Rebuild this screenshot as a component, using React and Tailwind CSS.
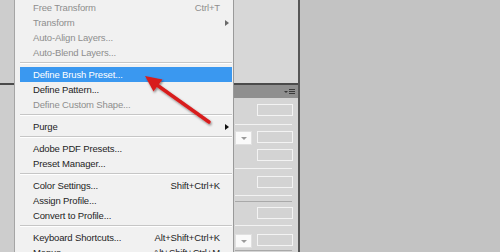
import React from 'react';

const rows = [
  { label: 'Free Transform', key: 'Ctrl+T', off: true },
  { label: 'Transform', sub: true, off: true },
  { label: 'Auto-Align Layers...', off: true },
  { label: 'Auto-Blend Layers...', off: true },
  { sep: true },
  { label: 'Define Brush Preset...', active: true },
  { label: 'Define Pattern...' },
  { label: 'Define Custom Shape...', off: true },
  { sep: true },
  { label: 'Purge', sub: true },
  { sep: true },
  { label: 'Adobe PDF Presets...' },
  { label: 'Preset Manager...' },
  { sep: true },
  { label: 'Color Settings...', key: 'Shift+Ctrl+K' },
  { label: 'Assign Profile...' },
  { label: 'Convert to Profile...' },
  { sep: true },
  { label: 'Keyboard Shortcuts...', key: 'Alt+Shift+Ctrl+K' },
  { label: 'Menus...', key: 'Alt+Shift+Ctrl+M' },
];

const MenuRow = ({ row }) => {
  if (row.sep) {
    return (
      <div className="h-[7px] shrink-0 pt-[2px] pl-[5px] pr-[1px]">
        <div className="border-t border-[#c6c6c6]" />
        <div className="border-t border-white" />
      </div>
    );
  }
  const color = row.active ? 'text-white' : row.off ? 'text-[#8e8e8e]' : 'text-[#1e1e1e]';
  return (
    <div className={`relative h-[15px] shrink-0 ml-[5px] mr-[1px] flex items-center justify-between pl-[13px] pr-[12px] ${row.active ? 'bg-[#3a98f0]' : ''} ${color}`}>
      <span>{row.label}</span>
      {row.key && <span>{row.key}</span>}
      {row.sub && (
        <span className={`absolute right-[3px] top-[5px] w-0 h-0 border-y-[3px] border-y-transparent border-l-[4px] ${row.off ? 'border-l-[#6a6a6a]' : 'border-l-[#111]'}`} />
      )}
    </div>
  );
};

const Box = () => <div className="w-[36px] h-[12px] border border-[#f3f3f3] bg-[#d3d3d3]" />;

const Drop = () => (
  <div className="w-[17px] h-[14px] bg-[#fafafa] border border-[#e0e0e0] flex items-center justify-center">
    <span className="w-0 h-0 border-x-[3px] border-x-transparent border-t-[3px] border-t-[#9a9a9a]" />
  </div>
);

const Rule = ({ dark }) => (
  <div className={`h-px mr-[6px] ${dark ? 'bg-[#a9a9a9]' : 'bg-[#f2f2f2]'}`} />
);

export default function App() {
  return (
    <div className="relative flex w-[500px] h-[252px] overflow-hidden bg-[#c3c3c3] text-[9.5px] tracking-[-0.15px] leading-none" style={{ fontFamily: '"Liberation Sans", Arial, sans-serif' }}>
      {/* panel edge behind the menu */}
      <div className="w-[14px] shrink-0 bg-[#cdcdcd] flex flex-col">
        <div className="h-[83px]" />
        <div className="h-[2px] bg-[#4a4a4a]" />
      </div>

      {/* menu */}
      <div className="w-[220px] shrink-0 bg-[#f1f1f1] border-l border-[#a5a5a5] border-r border-r-[#9a9a9a] flex flex-col">
        {rows.map((r, i) => <MenuRow key={i} row={r} />)}
      </div>

      {/* panel */}
      <div className="w-[66px] shrink-0 bg-[#d5d5d5] border-r-2 border-[#565656] flex flex-col">
        <div className="h-[83px] bg-[#d7d7d7]" />
        <div className="h-[2px] bg-[#4b4b4b]" />
        <div className="h-[13px] bg-[#8f8f8f] flex items-center justify-end pr-[3px] gap-[1px]">
          <span className="w-0 h-0 border-x-[2px] border-x-transparent border-t-[2px] border-t-[#3a3a3a]" />
          <span className="flex flex-col gap-[1px]">
            <span className="w-[6px] h-px bg-[#3a3a3a]" />
            <span className="w-[6px] h-px bg-[#3a3a3a]" />
            <span className="w-[6px] h-px bg-[#3a3a3a]" />
          </span>
        </div>
        <div className="flex flex-col pl-[1px]">
          <div className="h-[6px]" />
          <div className="flex justify-end pr-[5px]"><Box /></div>
          <div className="h-[8px]" />
          <Rule />
          <div className="h-[6px]" />
          <div className="flex justify-between pr-[5px]"><Drop /><Box /></div>
          <div className="h-[4px]" />
          <div className="flex justify-end pr-[5px]"><Box /></div>
          <div className="h-[7px]" />
          <Rule />
          <div className="h-[7px]" />
          <div className="flex justify-end pr-[5px]"><Box /></div>
          <div className="h-[7px]" />
          <Rule />
          <div className="h-[5px]" />
          <Rule dark />
          <div className="h-[5px]" />
          <div className="flex justify-end pr-[5px]"><Box /></div>
          <div className="h-[6px]" />
          <Rule />
          <div className="h-[8px]" />
          <div className="flex justify-between pr-[5px]"><Drop /><Box /></div>
          <div className="h-[2px]" />
          <Rule dark />
        </div>
      </div>

      <div className="flex-1 bg-[#c3c3c3]" />

      {/* red annotation arrow */}
      <svg className="absolute left-0 top-0" width="500" height="252">
        <defs>
          <filter id="sh" x="-20%" y="-20%" width="140%" height="140%">
            <feDropShadow dx="1" dy="1.5" stdDeviation="1" floodColor="#000" floodOpacity="0.45" />
          </filter>
        </defs>
        <g filter="url(#sh)" fill="#d81e1e">
          <polygon points="145,76 162.5,79.5 153.5,91.5" />
          <line x1="157" y1="85" x2="209" y2="122" stroke="#d81e1e" strokeWidth="3.5" strokeLinecap="round" />
        </g>
      </svg>
    </div>
  );
}
